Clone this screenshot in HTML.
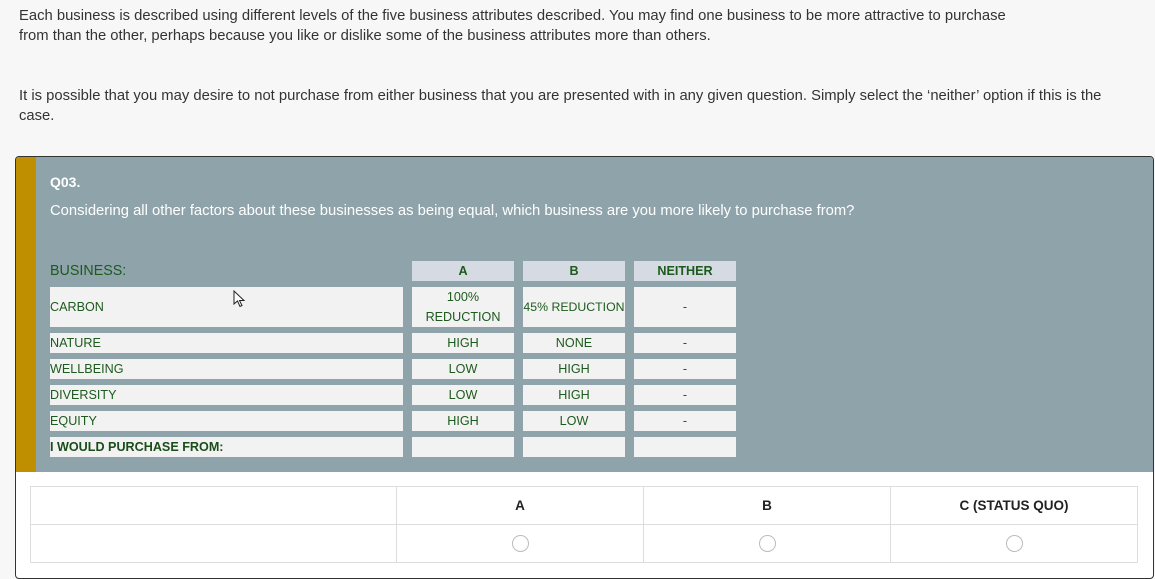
<!DOCTYPE html>
<html><head><style>
*{margin:0;padding:0;box-sizing:border-box}
body{width:1155px;height:579px;background:#f7f7f7;font-family:"Liberation Sans",sans-serif;position:relative;overflow:hidden;color:#333}
.p{position:absolute;left:19px;font-size:14.8px;line-height:20px;white-space:nowrap}
.card{position:absolute;left:15px;top:156px;width:1139px;height:423px;border:1px solid #333;border-radius:4px;background:#fff;overflow:hidden}
.blue{position:absolute;left:0;top:0;width:1139px;height:315px;background:#8fa3ab}
.gold{position:absolute;left:0;top:0;width:20px;height:315px;background:#c08f00}
.a{position:absolute;white-space:nowrap}
.c{position:absolute;background:#f2f2f2;color:#1d5a1d;font-size:12.6px;display:flex;align-items:center;justify-content:center;text-align:center;line-height:20px}
.l{justify-content:flex-start}
.h{background:#d5dae3;font-weight:bold}
table{position:absolute;left:14px;top:329px;width:1108px;border-collapse:collapse}
td{border:1px solid #ddd;height:38px;text-align:center;font-size:13.5px;font-weight:bold;color:#222}
.r{display:inline-block;width:17px;height:17px;border:1px solid #bbb;border-radius:50%;vertical-align:middle}
</style></head><body>
<div class="p" style="top:6px">Each business is described using different levels of the five business attributes described. You may find one business to be more attractive to purchase<br>from than the other, perhaps because you like or dislike some of the business attributes more than others.</div>
<div class="p" style="top:86px">It is possible that you may desire to not purchase from either business that you are presented with in any given question. Simply select the ‘neither’ option if this is the<br>case.</div>
<div class="card">
<div class="blue"></div><div class="gold"></div>
<div class="a" style="left:34px;top:17px;color:#fff;font-weight:bold;font-size:14px">Q03.</div>
<div class="a" style="left:34px;top:46px;color:#fff;font-size:14.8px">Considering all other factors about these businesses as being equal, which business are you more likely to purchase from?</div>
<div class="a" style="left:34px;top:106px;color:#1d5a1d;font-size:14.3px">BUSINESS:</div>
<div class="c h" style="left:396px;top:104px;width:102px;height:20px">A</div>
<div class="c h" style="left:507px;top:104px;width:102px;height:20px">B</div>
<div class="c h" style="left:618px;top:104px;width:102px;height:20px">NEITHER</div>

<div class="c l" style="left:34px;top:130px;width:353px;height:40px">CARBON</div>
<div class="c" style="left:396px;top:130px;width:102px;height:40px">100%<br>REDUCTION</div>
<div class="c" style="left:507px;top:130px;width:102px;height:40px;font-size:12.3px">45% REDUCTION</div>
<div class="c" style="left:618px;top:130px;width:102px;height:40px">-</div>

<div class="c l" style="left:34px;top:176px;width:353px;height:20px">NATURE</div>
<div class="c" style="left:396px;top:176px;width:102px;height:20px">HIGH</div>
<div class="c" style="left:507px;top:176px;width:102px;height:20px">NONE</div>
<div class="c" style="left:618px;top:176px;width:102px;height:20px">-</div>

<div class="c l" style="left:34px;top:202px;width:353px;height:20px">WELLBEING</div>
<div class="c" style="left:396px;top:202px;width:102px;height:20px">LOW</div>
<div class="c" style="left:507px;top:202px;width:102px;height:20px">HIGH</div>
<div class="c" style="left:618px;top:202px;width:102px;height:20px">-</div>

<div class="c l" style="left:34px;top:228px;width:353px;height:20px">DIVERSITY</div>
<div class="c" style="left:396px;top:228px;width:102px;height:20px">LOW</div>
<div class="c" style="left:507px;top:228px;width:102px;height:20px">HIGH</div>
<div class="c" style="left:618px;top:228px;width:102px;height:20px">-</div>

<div class="c l" style="left:34px;top:254px;width:353px;height:20px">EQUITY</div>
<div class="c" style="left:396px;top:254px;width:102px;height:20px">HIGH</div>
<div class="c" style="left:507px;top:254px;width:102px;height:20px">LOW</div>
<div class="c" style="left:618px;top:254px;width:102px;height:20px">-</div>

<div class="c l" style="left:34px;top:280px;width:353px;height:20px;font-weight:bold;color:#1a4d1a">I WOULD PURCHASE FROM:</div>
<div class="c" style="left:396px;top:280px;width:102px;height:20px"></div>
<div class="c" style="left:507px;top:280px;width:102px;height:20px"></div>
<div class="c" style="left:618px;top:280px;width:102px;height:20px"></div>

<svg class="a" style="left:217px;top:133px" width="14" height="18" viewBox="0 0 14 18"><path d="M1 1 L1 14 L4.5 11 L7 16.5 L9 15.5 L6.5 10.5 L11 10.5 Z" fill="#fff" stroke="#222" stroke-width="1"/></svg>

<table>
<tr><td style="width:366px"></td><td style="width:247px">A</td><td style="width:247px">B</td><td>C (STATUS QUO)</td></tr>
<tr><td></td><td><span class="r"></span></td><td><span class="r"></span></td><td><span class="r"></span></td></tr>
</table>
</div>
</body></html>
